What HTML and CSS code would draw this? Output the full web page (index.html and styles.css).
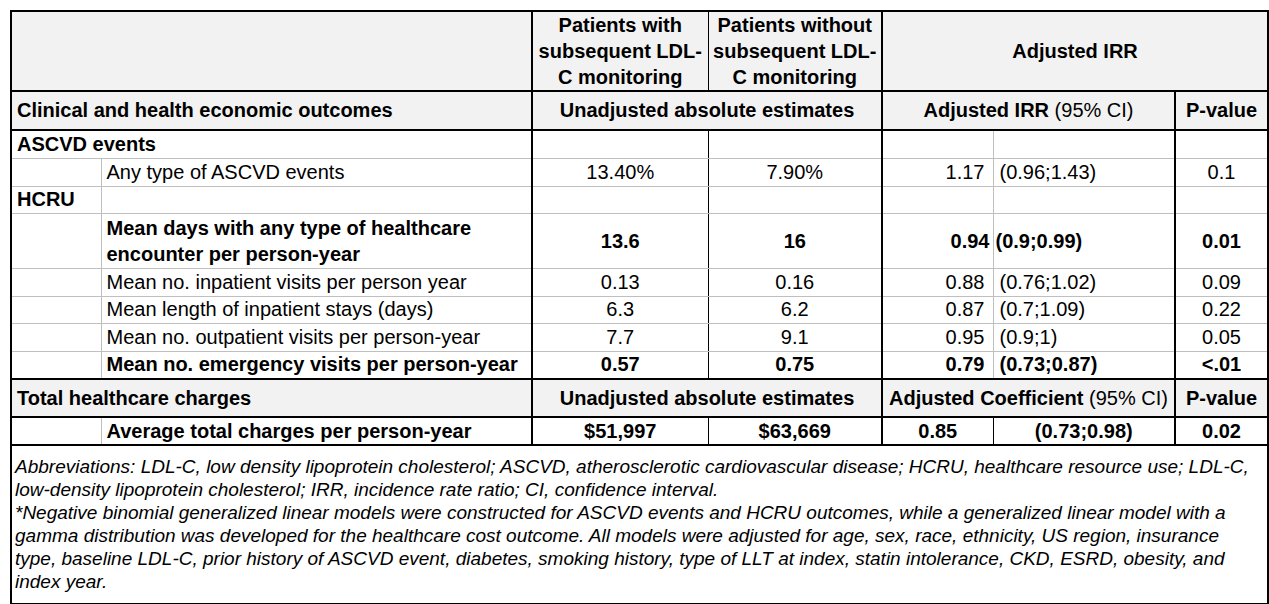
FILE: index.html
```html
<!DOCTYPE html>
<html lang="en">
<head>
<meta charset="utf-8">
<title>Outcomes by subsequent LDL-C monitoring</title>
<link rel="stylesheet" href="styles.css">
</head>
<body>
<table class="outcomes">
  <colgroup>
    <col class="c-indent"><col class="c-label"><col class="c-with"><col class="c-without"><col class="c-est"><col class="c-ci"><col class="c-p">
  </colgroup>
  <thead>
    <tr class="h1">
      <th colspan="2" class="hl"></th>
      <th class="sep-thick sep-a">Patients with subsequent LDL-C monitoring</th>
      <th class="sep-b">Patients without subsequent LDL-C monitoring</th>
      <th colspan="3" class="sep-thick">Adjusted IRR</th>
    </tr>
    <tr class="h2">
      <th colspan="2" class="hl lbl">Clinical and health economic outcomes</th>
      <th colspan="2" class="sep-thick">Unadjusted absolute estimates</th>
      <th colspan="2" class="sep-thick">Adjusted IRR <span class="reg">(95% CI)</span></th>
      <th class="sep-thick">P-value</th>
    </tr>
  </thead>
  <tbody>
    <tr class="row">
      <td colspan="2" class="lbl b">ASCVD events</td>
      <td class="sep-thick sep-a"></td><td class="sep-b"></td>
      <td class="sep-thick est"></td><td class="ci"></td><td class="sep-thick p"></td>
    </tr>
    <tr class="row">
      <td></td><td class="lbl">Any type of ASCVD events</td>
      <td class="sep-thick sep-a">13.40%</td><td class="sep-b">7.90%</td>
      <td class="sep-thick est">1.17</td><td class="ci">(0.96;1.43)</td><td class="sep-thick p">0.1</td>
    </tr>
    <tr class="row short">
      <td class="lbl b">HCRU</td><td></td>
      <td class="sep-thick sep-a"></td><td class="sep-b"></td>
      <td class="sep-thick est"></td><td class="ci"></td><td class="sep-thick p"></td>
    </tr>
    <tr class="row tall b">
      <td></td><td class="lbl">Mean days with any type of healthcare encounter per person-year</td>
      <td class="sep-thick sep-a">13.6</td><td class="sep-b">16</td>
      <td class="sep-thick est tight">0.94</td><td class="ci tight">(0.9;0.99)</td><td class="sep-thick p">0.01</td>
    </tr>
    <tr class="row">
      <td></td><td class="lbl">Mean no. inpatient visits per person year</td>
      <td class="sep-thick sep-a">0.13</td><td class="sep-b">0.16</td>
      <td class="sep-thick est">0.88</td><td class="ci">(0.76;1.02)</td><td class="sep-thick p">0.09</td>
    </tr>
    <tr class="row short">
      <td></td><td class="lbl">Mean length of inpatient stays (days)</td>
      <td class="sep-thick sep-a">6.3</td><td class="sep-b">6.2</td>
      <td class="sep-thick est">0.87</td><td class="ci">(0.7;1.09)</td><td class="sep-thick p">0.22</td>
    </tr>
    <tr class="row">
      <td></td><td class="lbl">Mean no. outpatient visits per person-year</td>
      <td class="sep-thick sep-a">7.7</td><td class="sep-b">9.1</td>
      <td class="sep-thick est">0.95</td><td class="ci">(0.9;1)</td><td class="sep-thick p">0.05</td>
    </tr>
    <tr class="row b">
      <td></td><td class="lbl">Mean no. emergency visits per person-year</td>
      <td class="sep-thick sep-a">0.57</td><td class="sep-b">0.75</td>
      <td class="sep-thick est">0.79</td><td class="ci">(0.73;0.87)</td><td class="sep-thick p">&lt;.01</td>
    </tr>
    <tr class="subhead">
      <th colspan="2" class="lbl">Total healthcare charges</th>
      <th colspan="2" class="sep-thick">Unadjusted absolute estimates</th>
      <th colspan="2" class="sep-thick">Adjusted Coefficient <span class="reg">(95% CI)</span></th>
      <th class="sep-thick">P-value</th>
    </tr>
    <tr class="row b last">
      <td></td><td class="lbl">Average total charges per person-year</td>
      <td class="sep-thick sep-a">$51,997</td><td class="sep-b">$63,669</td>
      <td class="sep-thick dark-r">0.85</td><td class="dark-l">(0.73;0.98)</td><td class="sep-thick p">0.02</td>
    </tr>
  </tbody>
  <tfoot>
    <tr>
      <td colspan="7" class="notes">
        <p>Abbreviations: LDL-C, low density lipoprotein cholesterol; ASCVD, atherosclerotic cardiovascular disease; HCRU, healthcare resource use; LDL-C, low-density lipoprotein cholesterol; IRR, incidence rate ratio; CI, confidence interval.</p>
        <p>*Negative binomial generalized linear models were constructed for ASCVD events and HCRU outcomes, while a generalized linear model with a gamma distribution was developed for the healthcare cost outcome. All models were adjusted for age, sex, race, ethnicity, US region, insurance type, baseline LDL-C, prior history of ASCVD event, diabetes, smoking history, type of LLT at index, statin intolerance, CKD, ESRD, obesity, and index year.</p>
      </td>
    </tr>
  </tfoot>
</table>
</body>
</html>
```
FILE: styles.css
```css
html, body {
  margin: 0;
  background: #ffffff;
}

body {
  padding: 10px 0 0 10px;
  font-family: "Liberation Sans", Arial, sans-serif;
  color: #000000;
}

.outcomes {
  border-collapse: collapse;
  table-layout: fixed;
  width: 1257px;
  font-size: 20px;
  border: 2px solid #000000;
}

.c-indent { width: 90px; }
.c-label { width: 431px; }
.c-with { width: 176px; }
.c-without { width: 174px; }
.c-est { width: 111px; }
.c-ci { width: 182px; }
.c-p { width: 93px; }

th, td {
  box-sizing: border-box;
  padding: 0 5px;
  line-height: 23px;
  vertical-align: middle;
  text-align: center;
}

/* header rows */
thead th {
  background: #f2f2f2;
  font-weight: bold;
  border: 2px solid #000000;
}

.h1 th {
  height: 80px;
  line-height: 26px;
  padding: 0 4px;
}

.h2 th {
  height: 39px;
}

th.lbl, td.lbl {
  text-align: left;
}

.reg {
  font-weight: normal;
}

/* body rows */
.row td {
  height: 28px;
  border: 1px solid #bfbfbf;
}

.row.short td {
  height: 27px;
}

.row.tall td {
  height: 55px;
  line-height: 26px;
}

.row.tall td.lbl {
  padding-right: 40px;
}

.b, .b td {
  font-weight: bold;
}

.outcomes .sep-thick {
  border-left: 2px solid #000000;
}

.outcomes .sep-a {
  border-right: 1px solid #000000;
}

.outcomes .sep-b {
  border-left: 1px solid #000000;
}

td.est {
  text-align: right;
  padding-right: 8px;
}

td.ci {
  text-align: left;
  padding-left: 6px;
}

td.est.tight {
  padding-right: 3px;
}

td.ci.tight {
  padding-left: 2px;
}

/* sub header: total healthcare charges */
.subhead th {
  background: #f2f2f2;
  font-weight: bold;
  height: 38px;
  border-top: 2px solid #000000;
  border-bottom: 2px solid #000000;
}

.subhead th.sep-thick {
  border-left: 2px solid #000000;
}

.row.last td {
  height: 28px;
  border-bottom: 2px solid #000000;
}

.outcomes .dark-r {
  border-right: 1px solid #000000;
}

.outcomes .dark-l {
  border-left: 1px solid #000000;
}

/* footnotes */
.notes {
  border: 2px solid #000000;
  text-align: left;
  font-size: 19px;
  font-style: italic;
  line-height: 23px;
  padding: 9px 6px 10px 3px;
  height: 157px;
  vertical-align: top;
}

.notes p {
  margin: 0;
}
```
